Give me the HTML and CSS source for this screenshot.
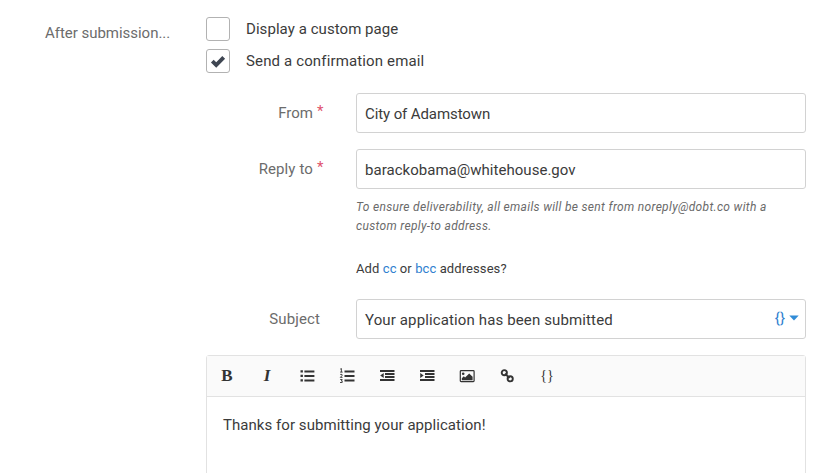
FILE: index.html
```html
<!DOCTYPE html>
<html lang="en">
<head>
<meta charset="utf-8">
<title>After submission</title>
<link rel="stylesheet" href="styles.css">
</head>
<body>
<form class="settings">
  <div class="section-label">After submission...</div>
  <div class="section-body">
    <div class="option">
      <span class="checkbox"></span>
      <span class="t-display">Display a custom page</span>
    </div>
    <div class="option">
      <span class="checkbox"><svg width="16" height="14" viewBox="0 0 16 14"><path d="M2.3 7.2 6.2 11 13.7 3.3" fill="none" stroke="#3f4652" stroke-width="3.9"/></svg></span>
      <span class="t-send">Send a confirmation email</span>
    </div>

    <div class="row row-from">
      <div class="label"><span>From</span><span class="required">*</span></div>
      <div class="input"><span class="t-city">City of Adamstown</span></div>
    </div>
    <div class="row">
      <div class="label"><span class="t-reply">Reply to</span><span class="required">*</span></div>
      <div class="input"><span class="t-email">barackobama@whitehouse.gov</span></div>
    </div>
    <div class="notes">
      <p class="hint">To ensure deliverability, all emails will be sent from noreply@dobt.co with a<br>custom reply-to address.</p>
      <p class="addresses">Add <a>cc</a> or <a>bcc</a> addresses?</p>
    </div>
    <div class="row">
      <div class="label label-plain"><span class="t-subject">Subject</span></div>
      <div class="input">
        <span class="t-subject-value">Your application has been submitted</span>
        <span class="insert"><span class="braces">{}</span><svg width="10" height="6" viewBox="0 0 10 6"><path d="M0.3 0.5h9.4L5 5.4z"/></svg></span>
      </div>
    </div>

    <div class="editor">
      <div class="toolbar">
        <span class="tool bold">B</span>
        <span class="tool italic">I</span>
        <span class="tool"><svg width="16" height="14" viewBox="0 0 16 14"><path d="M1.5 1.2h2.4v2.4H1.500zM1.500 5.700h2.400v2.400H1.500zM1.500 10.200h2.400v2.400H1.500zM5.400 1.500h10v2h-10zM5.400 6h10v2h-10zM5.400 10.500h10v2h-10z"/></svg></span>
        <span class="tool"><svg width="16" height="16" viewBox="0 0 16 16"><path d="M5.5 2.500h10v2h-10zM5.500 7h10v2h-10zM5.500 11.500h10v2h-10z"/><path d="M1.200 1.200l1.200-.7v3.600M1.100 4.100h2.600M1.200 6.400H3v1.300L1.300 9.400h2.200M1.200 11.500h2l-.9 1.300h.9v1.700H1" fill="none" stroke="#333" stroke-width=".9"/></svg></span>
        <span class="tool"><svg width="16" height="14" viewBox="0 0 16 14"><path d="M1 1h14.500v2H1zM6 4h9.500v2H6zM6 7h9.500v2H6zM1 10h14.500v2H1zM4.700 3.900v5.200L1.200 6.500z"/></svg></span>
        <span class="tool"><svg width="16" height="14" viewBox="0 0 16 14"><path d="M1 1h14.500v2H1zM6 4h9.500v2H6zM6 7h9.500v2H6zM1 10h14.500v2H1zM1.200 3.900v5.200l3.500-2.600z"/></svg></span>
        <span class="tool"><svg width="16" height="14" viewBox="0 0 16 14"><rect x="1.300" y="1.600" width="13.800" height="11" rx=".8" fill="none" stroke="#333" stroke-width="1.200"/><circle cx="4.200" cy="4.700" r="1.300"/><path d="M2.800 11.300V9.200l2-2 1.300 1.300 4.100-4.100 3.400 3.400v3.500z"/></svg></span>
        <span class="tool"><svg width="14" height="14" viewBox="0 0 14 14"><g fill="none" stroke="#333" stroke-width="1.900"><circle cx="4.300" cy="3.700" r="2.600"/><circle cx="10.200" cy="9.800" r="2.600"/><path d="M5 4.600 9.500 9.100"/></g></svg></span>
        <span class="tool code">{}</span>
      </div>
      <div class="content">Thanks for submitting your application!</div>
    </div>
  </div>
</form>
</body>
</html>
```
FILE: styles.css
```css
* { box-sizing: border-box; }
body {
  margin: 0;
  height: 473px;
  overflow: hidden;
  background: #fff;
  color: #3b3b3b;
  font: 15px/20px Roboto, "Liberation Sans", sans-serif;
  white-space: nowrap;
}
p { margin: 0; }
a { color: #2f80cf; }
svg { display: block; fill: #333; }
.settings { display: grid; grid-template-columns: 161px 600px; padding: 17px 0 0 45px; }
.section-label { padding-top: 6px; color: #6c6c6c; letter-spacing: -.03px; }
.option { display: flex; align-items: center; height: 24px; margin-bottom: 8px; gap: 16px; }
.checkbox {
  display: flex; align-items: center; justify-content: center;
  width: 24px; height: 24px;
  border: 1px solid #b2b2b2; border-radius: 3px;
}
.t-display { letter-spacing: .06px; }
.t-send { letter-spacing: .14px; }
.t-city { letter-spacing: -.1px; }
.t-email { letter-spacing: .03px; }
.t-reply, .t-subject { letter-spacing: .12px; }
.t-subject-value { letter-spacing: .13px; }
.row { display: grid; grid-template-columns: 117px 450px; column-gap: 33px; height: 40px; margin-bottom: 16px; }
.row-from { margin-top: 20px; }
.label { display: flex; justify-content: flex-end; padding-top: 10px; color: #6c6c6c; }
.label-plain { padding-right: 3px; }
.required { margin-left: 4px; width: 6px; color: #e0526e; line-height: 16px; }
.input {
  display: flex; align-items: center; justify-content: space-between;
  padding: 2px 6px 0 8px;
  border: 1px solid #d2d2d2; border-radius: 3px;
}
.notes { margin: -7px 0 20px 150px; font-size: 13px; }
.hint { color: #6a6a6a; font-style: italic; font-size: 12px; line-height: 19px; letter-spacing: .32px; }
.addresses { margin-top: 23px; line-height: 20px; letter-spacing: .09px; }
.insert { display: flex; align-items: center; gap: 4px; color: #2f80cf; padding-bottom: 4px; }
.insert svg { fill: #318cd7; }
.editor { height: 140px; border: 1px solid #e2e2e2; border-radius: 3px 3px 0 0; }
.toolbar { display: flex; align-items: center; height: 41px; background: #fafafa; border-bottom: 1px solid #e2e2e2; color: #333; }
.tool { display: flex; align-items: center; justify-content: center; width: 40px; height: 40px; }
.bold { font: bold 17px/20px "Liberation Serif", serif; }
.italic { font: italic bold 17px/20px "Liberation Serif", serif; }
.code { font: 14px/20px "Liberation Serif", serif; }
.content { padding: 18px 16px; letter-spacing: .05px; }
```
